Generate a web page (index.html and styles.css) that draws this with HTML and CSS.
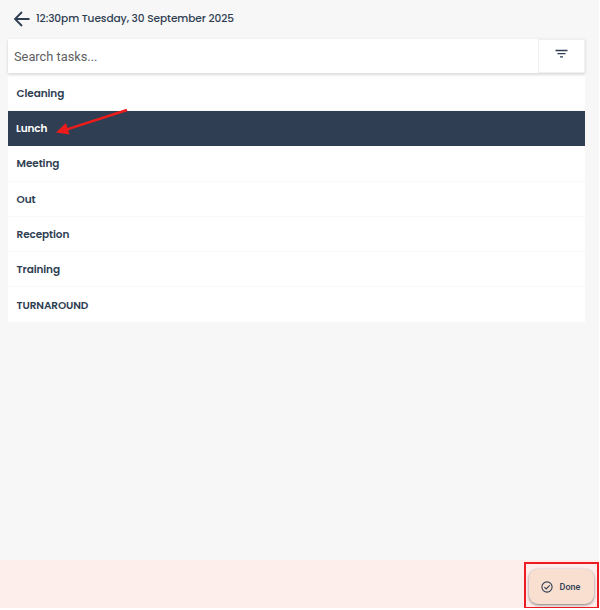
FILE: index.html
```html
<!DOCTYPE html>
<html lang="en">
<head>
<meta charset="utf-8">
<title>Tasks</title>
<link rel="stylesheet" href="styles.css">
</head>
<body>
<div class="app">
  <header class="header">
    <svg class="back" viewBox="0 0 16 16"><path d="M15.5 8H1.5M8 1L1 8l7 7"/></svg>
    <h1 class="title">12:30pm Tuesday, 30 September 2025</h1>
  </header>
  <main class="main">
    <div class="search">
      <input class="search-input" type="text" placeholder="Search tasks...">
      <button class="filter" aria-label="Filter">
        <svg class="filter-icon" viewBox="0 0 13 9"><path d="M.5 1.5h12M2.5 4.7h8M5 7.8h3"/></svg>
      </button>
    </div>
    <ul class="tasks">
      <li class="task">Cleaning</li>
      <li class="task selected">Lunch</li>
      <li class="task">Meeting</li>
      <li class="task">Out</li>
      <li class="task">Reception</li>
      <li class="task">Training</li>
      <li class="task">TURNAROUND</li>
    </ul>
  </main>
  <footer class="footer">
    <div class="highlight">
      <button class="done">
        <svg class="check" viewBox="0 0 12 12"><circle cx="6" cy="6" r="5.1"/><path d="M3.4 6.2l1.8 1.8 3.5-3.7"/></svg>
        Done
      </button>
    </div>
  </footer>
  <svg class="arrow" viewBox="0 0 74 28"><path class="shaft" d="M72 2L12 21.3"/><path class="head" d="M1 24.5L11 15 14.5 26.5z"/></svg>
</div>
</body>
</html>
```
FILE: styles.css
```css
* { box-sizing: border-box; }
body { margin: 0; background: #fff; color: #2f3e52; font-family: Poppins, Inter, sans-serif; }
.app { position: relative; width: 599px; height: 608px; display: flex; flex-direction: column; background: #f7f7f7; }
.header { height: 39px; padding: 1px 0 2px 14px; display: flex; align-items: center; gap: 6px; }
.back { width: 16px; height: 16px; fill: none; stroke: #2f3e52; stroke-width: 1.9; }
.title { margin: 0; font-size: 10.6px; font-weight: 500; line-height: 16px; letter-spacing: -.09px; white-space: nowrap; }
.main { width: 577px; margin-left: 8px; flex: 1; }
.search { position: relative; height: 34px; margin-bottom: 3px; display: flex; background: #fff; box-shadow: 0 1px 3px rgba(0,0,0,.15); }
.search-input { flex: 1; min-width: 0; padding: 1px 6px 0; border: 0; background: none; font: 12.8px Roboto, sans-serif; }
.search-input::placeholder { color: #606060; opacity: 1; }
.filter { width: 47px; padding: 0 0 5px; border: 1px solid #f0f0f0; background: #fff; display: flex; align-items: center; justify-content: center; }
.filter-icon { width: 13px; height: 9px; fill: none; stroke: #2f3e52; stroke-width: 1.3; }
.tasks { margin: 0; padding: 0; list-style: none; background: #fff; }
.task { height: 35.2px; padding: 2px 9px 0 8.6px; display: flex; align-items: center; border-bottom: 1px solid #f9f9f9; font-size: 10.5px; font-weight: 600; letter-spacing: -.12px; }
.task:last-child { border-bottom: 0; }
.selected { padding-left: 8px; background: #2f3e52; border-color: #2f3e52; color: #fff; }
.footer { height: 48px; display: flex; justify-content: flex-end; background: #fdeeec; }
.highlight { width: 75px; height: 47px; margin: 2px 0 0; padding: 5px 3px 3px; border: 2px solid #ed1c24; background: #fdeeec; flex-shrink: 0; }
.done { width: 65px; height: 35px; padding: 0 2px 0 0; border: 0; border-radius: 9px; background: #f9dfd0; box-shadow: 0 1px 3px rgba(0,0,0,.5); color: #2f3e52; font: 500 9px Roboto, sans-serif; display: flex; align-items: center; justify-content: center; gap: 7px; }
.check { width: 12px; height: 12px; fill: none; stroke: #2f3e52; stroke-width: 1.1; }
.arrow { position: absolute; left: 55px; top: 108px; width: 74px; height: 28px; }
.shaft { fill: none; stroke: #ed1c1c; stroke-width: 2.4; }
.head { fill: #ed1c1c; }
```
